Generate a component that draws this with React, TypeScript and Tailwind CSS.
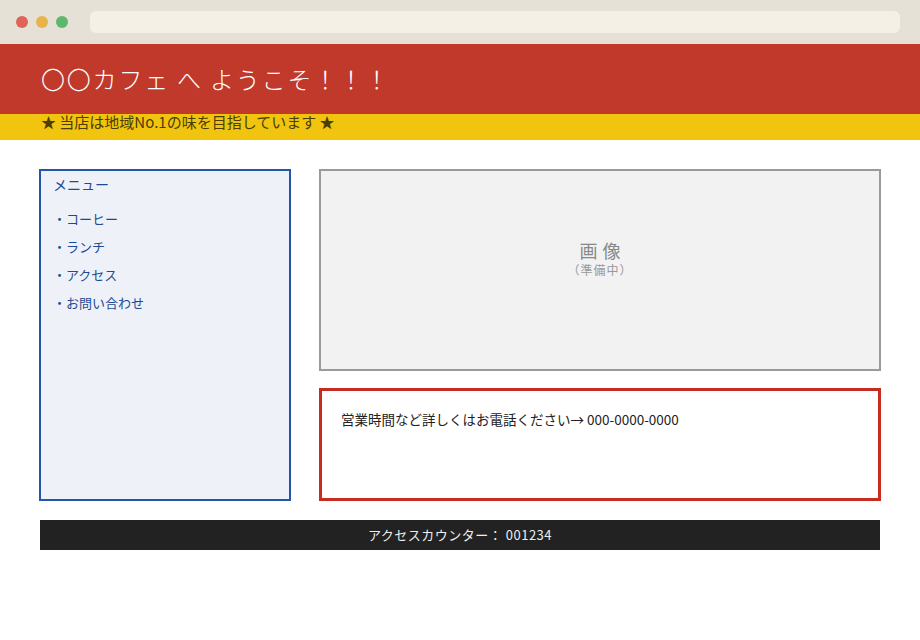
const menuItems = ["コーヒー", "ランチ", "アクセス", "お問い合わせ"];

export default function App() {
  return (
    <div
      className="w-[920px] h-[640px] bg-white overflow-hidden"
      style={{ fontFamily: '"Noto Sans CJK JP", "Noto Sans", sans-serif' }}
    >
      {/* browser chrome */}
      <div className="h-[44px] bg-[#e6e1d6] flex items-center pl-[16px] pr-[20px]">
        <div className="flex gap-[8px]">
          <span className="w-[12px] h-[12px] rounded-full bg-[#e06358]" />
          <span className="w-[12px] h-[12px] rounded-full bg-[#e8b44a]" />
          <span className="w-[12px] h-[12px] rounded-full bg-[#5cb86c]" />
        </div>
        <div className="ml-[22px] flex-1 h-[22px] rounded-[6px] bg-[#f4f0e6]" />
      </div>

      {/* header */}
      <header className="h-[70px] bg-[#c0392b] flex items-center px-[41px]">
        <h1 className="text-white text-[24px] font-light tracking-[1.8px] leading-none">
          〇〇カフェ へ ようこそ！！！
        </h1>
      </header>
      <div className="h-[26px] bg-[#f1c40f] px-[41px]">
        <p className="text-[15px] leading-[15px] text-[#4d3d00]">
          ★ 当店は地域No.1の味を目指しています ★
        </p>
      </div>

      {/* content */}
      <div className="flex gap-[28px] pl-[39px] pr-[39px] pt-[29px]">
        <aside className="w-[252px] h-[332px] border-2 border-[#2456a8] bg-[#eef1f7] px-[12px] pt-[4px]">
          <h2 className="text-[14px] text-[#1d4a94] leading-[18px]">メニュー</h2>
          <ul className="mt-[17px] flex flex-col gap-[10px]">
            {menuItems.map((item) => (
              <li key={item} className="text-[13px] leading-[18px] text-[#1d4a94]">
                ・{item}
              </li>
            ))}
          </ul>
        </aside>

        <main className="flex-1 flex flex-col gap-[17px]">
          <div className="h-[202px] border-2 border-[#9a9a9a] bg-[#f2f2f2] flex flex-col items-center justify-center pb-[23px]">
            <span className="text-[18px] leading-[22px] text-[#888] tracking-[5px] pl-[5px]">画像</span>
            <span className="text-[12px] leading-[16px] text-[#999] tracking-[1px] mt-[1px]">（準備中）</span>
          </div>
          <div className="h-[113px] border-[3px] border-[#c62d20] bg-white px-[19px] pt-[19px]">
            <p className="text-[13.5px] leading-[18px] text-[#222]">
              営業時間など詳しくはお電話ください→ 000-0000-0000
            </p>
          </div>
        </main>
      </div>

      {/* footer */}
      <footer className="mx-[40px] mt-[19px] h-[30px] bg-[#222] flex items-center justify-center">
        <span className="text-[13px] text-[#eee] tracking-[0.5px]">アクセスカウンター： 001234</span>
      </footer>
    </div>
  );
}
